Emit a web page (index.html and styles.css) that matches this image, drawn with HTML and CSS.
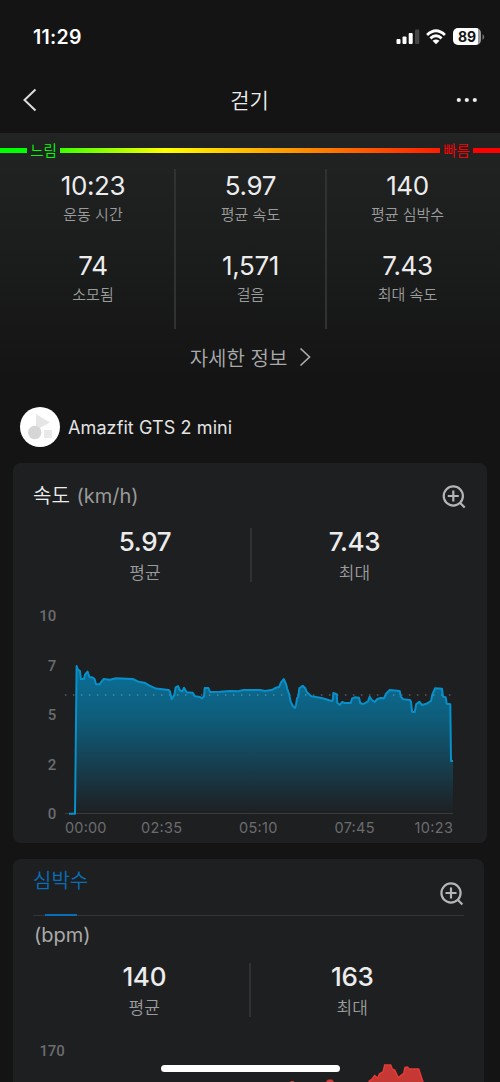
FILE: index.html
```html
<!DOCTYPE html>
<html lang="ko">
<head>
  <meta charset="UTF-8" />
  <meta name="viewport" content="width=device-width, initial-scale=1.0"/>
  <title>걷기</title>
  <link rel="stylesheet" href="styles.css">
</head>
<body>

  <div class="status-bar">
    <span class="clock">11:29</span>
    <div class="status-icons">
      <svg width="24" height="16" viewBox="0 0 24 16">
        <rect x="0.5" y="10" width="4" height="5" rx="1" fill="#fff"/>
        <rect x="6.5" y="7.5" width="4" height="7.5" rx="1" fill="#fff"/>
        <rect x="12.7" y="4" width="4" height="11" rx="1" fill="#fff"/>
        <rect x="19" y="0.5" width="4.3" height="14.5" rx="1" fill="#454545"/>
      </svg>
      <svg class="wifi" width="20" height="16" viewBox="0 0 20 16">
        <g fill="none" stroke="#fff" stroke-width="2.8">
          <path d="M1.1 6 Q10 -2.4 18.9 6"/>
          <path d="M4.4 9.4 Q10 4.2 15.6 9.4"/>
        </g>
        <path d="M6.5 11.8 Q10 9.2 13.5 11.8 L10 15.2 Z" fill="#fff"/>
      </svg>
      <div class="battery"><span>89</span></div>
      <svg class="battery-tip" width="3" height="6" viewBox="0 0 3 6"><path d="M0.5 0 Q4 3 0.5 6 Z" fill="#777"/></svg>
    </div>
  </div>

  <header class="nav-bar">
    <svg width="16" height="26" viewBox="0 0 16 26"><path d="M13.5 2.5 L2.5 13 L13.5 23.5" fill="none" stroke="#ddd" stroke-width="2"/></svg>
    <h1>걷기</h1>
    <svg width="22" height="6" viewBox="0 0 22 6" fill="#eee">
      <circle cx="2.8" cy="3" r="2.1"/><circle cx="10.8" cy="3" r="2.1"/><circle cx="18.8" cy="3" r="2.1"/>
    </svg>
  </header>

  <section class="summary">
    <div class="pace-bar">
      <span class="pace-label slow">느림</span>
      <span class="pace-label fast">빠름</span>
    </div>

    <div class="stats">
      <div class="stats-col">
        <div class="stat"><b>10:23</b><span>운동 시간</span></div>
        <div class="stat"><b>74</b><span>소모됨</span></div>
      </div>
      <div class="stats-col">
        <div class="stat"><b>5.97</b><span>평균 속도</span></div>
        <div class="stat"><b>1,571</b><span>걸음</span></div>
      </div>
      <div class="stats-col">
        <div class="stat"><b>140</b><span>평균 심박수</span></div>
        <div class="stat"><b>7.43</b><span>최대 속도</span></div>
      </div>
    </div>

    <div class="more">
      <span>자세한 정보</span>
      <svg width="12" height="20" viewBox="0 0 12 20"><path d="M1.5 1.5 L10.5 10 L1.5 18.5" fill="none" stroke="#aaa" stroke-width="1.7"/></svg>
    </div>
  </section>

  <div class="device">
    <svg width="40" height="40" viewBox="0 0 40 40">
      <circle cx="20" cy="20" r="20" fill="#fff"/>
      <path d="M16 7 L30 15.5 L16 23 Z" fill="#e6e6e6"/>
      <circle cx="14.7" cy="25.5" r="6.7" fill="#d6d6d6"/>
      <rect x="24" y="23" width="8" height="8" fill="#e9e9e9"/>
    </svg>
    <span>Amazfit GTS 2 mini</span>
  </div>

  <section class="card speed">
    <div class="card-head">
      <h2>속도 <small>(km/h)</small></h2>
      <svg class="zoom-icon" width="24" height="24" viewBox="0 0 24 24" fill="none" stroke="#b5b5b5" stroke-width="2.2">
        <circle cx="11.3" cy="11" r="9.6"/><path d="M11.3 5.5 V16.5 M5.8 11 H16.8 M17.7 17.5 L22.7 22.5"/>
      </svg>
    </div>
    <div class="pair">
      <div class="pair-item"><b>5.97</b><span>평균</span></div>
      <div class="pair-item"><b>7.43</b><span>최대</span></div>
    </div>
    <svg class="chart" width="474" height="243" viewBox="13 600 474 243">
      <defs>
        <linearGradient id="speedFill" gradientUnits="userSpaceOnUse" x1="0" y1="666" x2="0" y2="814">
          <stop offset="0" stop-color="#0b7099"/>
          <stop offset="0.35" stop-color="#0e5d7b"/>
          <stop offset="1" stop-color="#1e1f21"/>
        </linearGradient>
      </defs>
      <path d="M65 813.5 H453" stroke="#3a3b3d"/>
      <path id="speedArea" fill="url(#speedFill)"/>
      <path d="M65 695 H453" stroke="#b9c4c8" stroke-opacity="0.4" stroke-width="1.4" stroke-dasharray="1.4 6.6"/>
      <path id="speedLine" fill="none" stroke="#0890cb" stroke-width="2" stroke-linejoin="round"/>
      <g class="axis-y" text-anchor="end">
        <text x="56" y="621">10</text>
        <text x="56" y="671">7</text>
        <text x="56" y="720">5</text>
        <text x="56" y="770">2</text>
        <text x="56" y="819">0</text>
      </g>
      <g class="axis-x">
        <text x="65" y="833.3" textLength="41.5">00:00</text>
        <text x="141" y="833.3" textLength="41">02:35</text>
        <text x="239" y="833.3" textLength="38.5">05:10</text>
        <text x="334.5" y="833.3" textLength="40">07:45</text>
        <text x="414.5" y="833.3" textLength="38.5">10:23</text>
      </g>
    </svg>
  </section>

  <section class="card heart">
    <div class="tab-row">
      <span class="tab active">심박수</span>
      <svg class="zoom-icon" width="24" height="24" viewBox="0 0 24 24" fill="none" stroke="#b5b5b5" stroke-width="2.2">
        <circle cx="11" cy="11" r="9.6"/><path d="M11 5.5 V16.5 M5.5 11 H16.5 M17.4 17.5 L22.4 22.5"/>
      </svg>
    </div>
    <p class="unit">(bpm)</p>
    <div class="pair">
      <div class="pair-item"><b>140</b><span>평균</span></div>
      <div class="pair-item"><b>163</b><span>최대</span></div>
    </div>
    <svg class="chart" width="471" height="52" viewBox="13 1030 471 52">
      <text class="axis-y" x="64.5" y="1056" text-anchor="end">170</text>
      <path d="M289 1083 L291 1081 L293.5 1081 L295 1083 Z M325 1083 L328 1079.5 L332 1079.5 L335 1083 Z" fill="#d63a34"/>
      <path d="M368 1084 L369.3 1081 L372 1079 L374.7 1075.5 L378 1078 L379.3 1074 L383 1072 L384.7 1065 L390.7 1065 L392.3 1069 L394.7 1070 L398.3 1077.7 L403.7 1073.3 L405 1067.5 L407.5 1067 L409.3 1069 L418.7 1069 L420.7 1075 L423.7 1084" fill="#c63833" stroke="#e33b35" stroke-width="1.5"/>
    </svg>
  </section>

  <div class="home-indicator"></div>

  <script>
    // x,y points of the speed curve
    const points = `69,813.7 75,813.7 76.6,666 77.7,669.3 80,671 80.8,679 84,679 85,674.7 87.5,671.5 89.5,677
      92.6,677.5 94.6,679 96,684.3 99.5,684.3 101.5,681.7 103.7,679 110,679.7 116,678.2 132.6,679 138.5,681.7
      144.5,682.7 149.5,685.7 156,688.6 168.7,690 170,691.5 171.7,699.3 174.3,695 175.7,687.3 178,686 180,690.5
      182.4,691.3 184,687.7 186.7,692.3 192.7,692.7 195,696.3 200,697 202,698.3 204,696.3 204.7,688 208.4,688
      210,692 220,691.7 230,691 238.4,691.3 243.5,690 260,690 265,691 272.7,689.7 276,687.7 279,687
      281.3,682 283.7,679 286,684 287.3,689 289.3,694.7 290.7,701.7 292.7,706 295,708 296,705 297,698.3
      298.3,696.7 299.3,688.3 302.7,685.7 305.3,688.3 307,692.3 311.3,696.3 321.7,698 331.7,701 332.7,700.7
      333.3,693 336.7,694.3 337.3,702.7 340,705 342,702 344.7,703 350.7,703 352,698.7 354.7,697.3
      359,697.7 360.3,703.3 363.3,704 368,701.3 369.7,696.7 371.7,699.7 374.7,702 377.3,699 380.7,698
      384,698.3 386,693.7 389.7,690 399.7,691 400.7,696.3 403.3,699.3 410,700 411,701.7 412,711.7
      414.7,712 416.3,704 419.3,701.7 422,705 426.7,703.7 431,701 432.3,694.7 435,688.3 442,688.7
      443,696.7 445.7,697.3 446.7,703.7 450.3,704.3 451,761 453,761`.trim().split(/\s+/);

    const line = 'M' + points.join(' L');
    document.getElementById('speedLine').setAttribute('d', line);
    document.getElementById('speedArea').setAttribute('d', line + ' L453,813 L69,813 Z');
  </script>
</body>
</html>
```
FILE: styles.css
```css
* {
  box-sizing: border-box;
}

body {
  margin: 0;
  height: 1082px;
  overflow: hidden;
  background: #141414;
  color: #ececec;
  font-family: Inter, 'Noto Sans CJK KR', sans-serif;
}

svg {
  display: block;
  flex: none;
}

h1, h2, p {
  margin: 0;
  font-weight: 350;
}

.status-bar {
  height: 67px;
  padding: 6px 15px 0 33px;
  display: flex;
  justify-content: space-between;
  align-items: center;
}

.clock {
  color: #fff;
  font-size: 19.5px;
  font-weight: 600;
  letter-spacing: 0.3px;
}

.status-icons {
  display: flex;
  align-items: center;
}

.wifi {
  margin: 0 7px 0 6px;
}

.battery {
  width: 28px;
  height: 17px;
  border-radius: 5px;
  background: linear-gradient(to right, #fff 89%, #999 89%);
  color: #141414;
  font-size: 14px;
  font-weight: 700;
  line-height: 17px;
  text-align: center;
}

.battery-tip {
  margin-left: 1px;
}

.nav-bar {
  height: 66px;
  padding: 0 22px;
  display: flex;
  justify-content: space-between;
  align-items: center;
}

.nav-bar h1 {
  font-size: 21px;
  line-height: 30px;
  padding: 2px 0 0 5px;
}

.summary {
  height: 260px;
  background: linear-gradient(#222424, #141414 95%);
}

.pace-bar {
  height: 36px;
  display: flex;
  justify-content: space-between;
  align-items: center;
  padding: 0 27px;
  background: linear-gradient(to right, #0f0 0, #0f0 27px, #ff0 165px, #f00 475px) 0 15px / 100% 5px no-repeat;
}

.pace-label {
  width: 33px;
  background: #212323;
  font-size: 14.5px;
  font-weight: 350;
  line-height: 20px;
  text-align: center;
}

.slow {
  color: #0f0;
}

.fast {
  color: #f00;
}

.stats {
  height: 160px;
  padding: 0 17px;
  display: grid;
  grid-template-columns: 157px 151px 1fr;
}

.stats-col {
  display: flex;
  flex-direction: column;
}

.stats-col + .stats-col {
  border-left: 2px solid #303131;
}

.stat {
  height: 80px;
  text-align: center;
}

.stats-col:first-child .stat {
  padding-right: 5px;
}

.stats-col:last-child .stat {
  padding-left: 5px;
}

.stat b {
  display: block;
  font-size: 26px;
  font-weight: 400;
  line-height: 34px;
  letter-spacing: -0.35px;
}

.stat span {
  display: block;
  color: #9b9c9c;
  font-size: 15px;
  font-weight: 350;
  line-height: 24px;
}

.more {
  height: 56px;
  display: flex;
  justify-content: center;
  align-items: center;
  gap: 12px;
  padding-left: 1px;
  color: #aaa;
  font-size: 20px;
  font-weight: 350;
}

.device {
  height: 70px;
  padding: 14px 20px 16px;
  display: flex;
  align-items: center;
  gap: 8px;
  color: #e3e3e3;
  font-size: 18px;
  letter-spacing: 0.1px;
}

.card {
  margin-left: 13px;
  background: #1e1f21;
}

.speed {
  width: 474px;
  height: 380px;
  border-radius: 8px;
}

.card-head {
  height: 65px;
  padding: 2px 21px 0 20px;
  display: flex;
  justify-content: space-between;
  align-items: center;
}

.card-head h2 {
  font-size: 20px;
  line-height: 28px;
  padding-bottom: 1px;
}

.card-head small {
  margin-left: 1px;
  color: #999;
  font-size: 20px;
  font-weight: 400;
}

.pair {
  height: 54px;
  padding: 0 27px;
  display: grid;
  grid-template-columns: 1fr 1fr;
  grid-template-rows: 54px;
}

.pair-item {
  text-align: center;
}

.pair-item + .pair-item {
  border-left: 2px solid #303133;
  padding-right: 3px;
}

.pair-item b {
  display: block;
  font-size: 26px;
  font-weight: 500;
  line-height: 28px;
  letter-spacing: -0.3px;
}

.pair-item span {
  display: block;
  color: #9b9c9c;
  font-size: 17px;
  font-weight: 350;
  line-height: 34px;
}

.speed .chart {
  margin-top: 18px;
}

.axis-y {
  fill: #6b6c6e;
  font-family: Roboto, sans-serif;
  font-size: 15px;
  font-weight: 500;
  letter-spacing: -0.2px;
}

.axis-x {
  fill: #6b6c6e;
  font-size: 14.5px;
}

.heart {
  width: 471px;
  height: 223px;
  margin-top: 16px;
  border-radius: 8px 8px 0 0;
}

.tab-row {
  height: 57px;
  margin: 0 20px;
  display: flex;
  justify-content: space-between;
  border-bottom: 1px solid #333436;
}

.tab-row .zoom-icon {
  margin-top: 23px;
}

.tab {
  color: #0a6db5;
  font-size: 20px;
  font-weight: 350;
  line-height: 44px;
}

.tab.active::after {
  content: '';
  display: block;
  width: 32px;
  height: 2px;
  margin: 11px auto 0;
  background: #0a6db5;
}

.unit {
  height: 47px;
  padding-left: 21px;
  color: #aaa;
  font-size: 20px;
  font-weight: 400;
  line-height: 38px;
}

.heart .chart {
  margin-top: 13px;
}

.home-indicator {
  position: fixed;
  left: 161px;
  bottom: 10px;
  width: 179px;
  height: 7px;
  border-radius: 4px;
  background: #fff;
}
```
